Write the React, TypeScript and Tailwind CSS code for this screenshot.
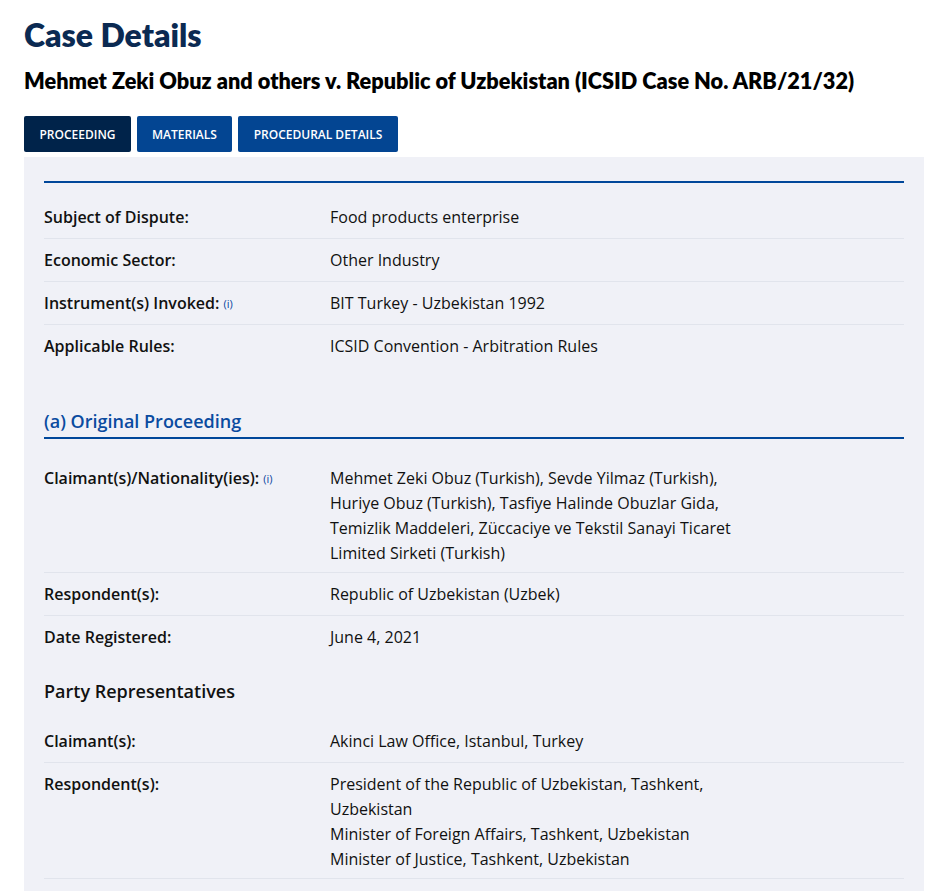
import React from "react";

type Row = { label: string; info?: boolean; tight?: boolean; value: React.ReactNode };

const summary: Row[] = [
  { label: "Subject of Dispute:", value: "Food products enterprise" },
  { label: "Economic Sector:", value: "Other Industry" },
  { label: "Instrument(s) Invoked:", info: true, value: "BIT Turkey - Uzbekistan 1992" },
  { label: "Applicable Rules:", value: "ICSID Convention - Arbitration Rules" },
];

const original: Row[] = [
  {
    label: "Claimant(s)/Nationality(ies):",
    info: true,
    tight: true,
    value:
      "Mehmet Zeki Obuz (Turkish), Sevde Yilmaz (Turkish), Huriye Obuz (Turkish), Tasfiye Halinde Obuzlar Gida, Temizlik Maddeleri, Züccaciye ve Tekstil Sanayi Ticaret Limited Sirketi (Turkish)",
  },
  { label: "Respondent(s):", value: "Republic of Uzbekistan (Uzbek)" },
  { label: "Date Registered:", value: "June 4, 2021" },
];

const reps: Row[] = [
  { label: "Claimant(s):", value: "Akinci Law Office, Istanbul, Turkey" },
  {
    label: "Respondent(s):",
    tight: true,
    value: (
      <>
        <div>President of the Republic of Uzbekistan, Tashkent, Uzbekistan</div>
        <div>Minister of Foreign Affairs, Tashkent, Uzbekistan</div>
        <div>Minister of Justice, Tashkent, Uzbekistan</div>
      </>
    ),
  },
];

function Rows({ rows, lastBorder }: { rows: Row[]; lastBorder?: boolean }) {
  return (
    <div>
      {rows.map((r, i) => (
        <div
          key={r.label}
          className={
            "flex pt-[9px] " +
            (r.tight ? "pb-[6px] " : "pb-[8px] ") +
            (i < rows.length - 1 || lastBorder ? "border-b border-[#e1e4ec]" : "")
          }
        >
          <div className="w-[286px] shrink-0 font-semibold text-[#111]">
            {r.label}
            {r.info && (
              <span className="ml-1 align-[1px] text-[11px] font-normal text-[#0a45a0]">(i)</span>
            )}
          </div>
          <div className="w-[410px] text-[#111]">{r.value}</div>
        </div>
      ))}
    </div>
  );
}

export default function App() {
  const heading = { fontFamily: "Lato, 'Noto Sans', sans-serif" };
  return (
    <div
      className="min-h-[891px] bg-white px-6 pt-[15px] text-[16px] leading-[25px]"
      style={{ fontFamily: "'Open Sans', 'Noto Sans', sans-serif" }}
    >
      <h1 className="text-[32px] font-extrabold leading-[40px] text-[#0b2a52]" style={heading}>
        Case Details
      </h1>
      <h2 className="mt-[12px] text-[21.7px] font-extrabold leading-[28px] text-black" style={heading}>
        Mehmet Zeki Obuz and others v. Republic of Uzbekistan (ICSID Case No. ARB/21/32)
      </h2>
      <div className="mt-[21px] flex gap-[6px]">
        <button className="h-[36px] w-[107px] rounded-[2px] bg-[#00234a] text-[12px] font-semibold text-white">
          PROCEEDING
        </button>
        <button className="h-[36px] w-[95px] rounded-[2px] bg-[#034592] text-[12px] font-semibold text-white">
          MATERIALS
        </button>
        <button className="h-[36px] w-[160px] rounded-[2px] bg-[#034592] text-[12px] font-semibold text-white">
          PROCEDURAL DETAILS
        </button>
      </div>
      <div className="mt-[5px] w-[900px] bg-[#f0f1f7] px-5 pt-[24px] pb-10">
        <div className="border-t-2 border-[#00479a]" />
        <div className="mt-[13px]">
          <Rows rows={summary} />
        </div>
        <h3 className="mt-[40px] border-b-2 border-[#00479a] pb-[2px] text-[18px] font-semibold leading-[28px] text-[#0a4ba0]">
          (a) Original Proceeding
        </h3>
        <div className="mt-[18px]">
          <Rows rows={original} />
        </div>
        <h3 className="mt-[19px] text-[18px] font-semibold leading-[28px] text-[#111]">
          Party Representatives
        </h3>
        <div className="mt-[15px]">
          <Rows rows={reps} lastBorder />
        </div>
      </div>
    </div>
  );
}
